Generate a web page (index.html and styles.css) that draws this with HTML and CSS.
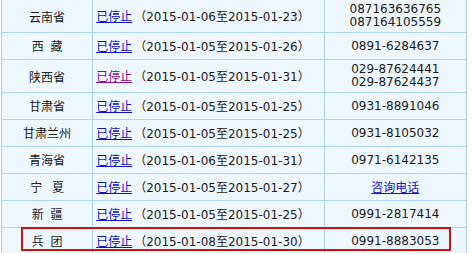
FILE: index.html
```html
<!DOCTYPE html>
<html>
<head>
<meta charset="utf-8">
<link rel="stylesheet" href="styles.css">
</head>
<body>
<div class="wrap">
<table class="tbl">
  <colgroup><col class="c1"><col class="c2"><col class="c3"></colgroup>
  <tr class="dbl"><td class="prov">云南省</td><td class="date"><a href="#" class="lnk">已停止</a><span class="rng">（2015-01-06至2015-01-23）</span></td><td class="tel">087163636765<br>087164105559</td></tr>
  <tr><td class="prov sp">西 藏</td><td class="date"><a href="#" class="lnk">已停止</a><span class="rng">（2015-01-05至2015-01-26）</span></td><td class="tel">0891-6284637</td></tr>
  <tr class="dbl"><td class="prov">陕西省</td><td class="date"><a href="#" class="lnk visited">已停止</a><span class="rng">（2015-01-05至2015-01-31）</span></td><td class="tel">029-87624441<br>029-87624437</td></tr>
  <tr><td class="prov">甘肃省</td><td class="date"><a href="#" class="lnk">已停止</a><span class="rng">（2015-01-05至2015-01-25）</span></td><td class="tel">0931-8891046</td></tr>
  <tr><td class="prov">甘肃兰州</td><td class="date"><a href="#" class="lnk">已停止</a><span class="rng">（2015-01-05至2015-01-25）</span></td><td class="tel">0931-8105032</td></tr>
  <tr><td class="prov">青海省</td><td class="date"><a href="#" class="lnk">已停止</a><span class="rng">（2015-01-06至2015-01-31）</span></td><td class="tel">0971-6142135</td></tr>
  <tr><td class="prov sp wide">宁 夏</td><td class="date"><a href="#" class="lnk">已停止</a><span class="rng">（2015-01-05至2015-01-27）</span></td><td class="tel"><a href="#" class="lnk">咨询电话</a></td></tr>
  <tr><td class="prov sp">新 疆</td><td class="date"><a href="#" class="lnk">已停止</a><span class="rng">（2015-01-05至2015-01-25）</span></td><td class="tel">0991-2817414</td></tr>
  <tr><td class="prov sp">兵 团</td><td class="date"><a href="#" class="lnk">已停止</a><span class="rng">（2015-01-08至2015-01-30）</span></td><td class="tel">0991-8883053</td></tr>
</table>
<div class="mark"></div>
</div>
</body>
</html>
```
FILE: styles.css
```css
html, body { margin: 0; padding: 0; background: #fff; }
body { font-family: "DejaVu Sans", "Noto Sans CJK SC", sans-serif; font-size: 12px; color: #1a1a1a; }
.wrap { position: relative; width: 473px; height: 253px; overflow: hidden; }
.tbl { border-collapse: collapse; margin: -1px 0 0 1px; table-layout: fixed; width: 466px; }
.c1 { width: 91px; }
.c2 { width: 231px; }
.c3 { width: 142px; }
.tbl td { border: 1px solid #a9d3f3; background: #eef6fe; height: 26px; padding: 0; line-height: 14px; vertical-align: middle; }
.tbl tr.dbl td { height: 32px; line-height: 13px; }
.prov { text-align: center; font-family: "Noto Sans CJK SC", sans-serif; }
.prov.sp { word-spacing: 4px; }
.prov.sp.wide { word-spacing: 7px; }
.date { padding-left: 3px !important; white-space: nowrap; }
.tel { text-align: center; }
.lnk { color: #1010c8; text-decoration: underline; font-family: "Noto Sans CJK SC", sans-serif; }
.lnk.visited { color: #8a0a8a; }
.rng { margin-left: 2px; }
.mark { position: absolute; left: 21px; top: 227px; width: 426px; height: 20px; border: 2px solid #d01010; }
```
